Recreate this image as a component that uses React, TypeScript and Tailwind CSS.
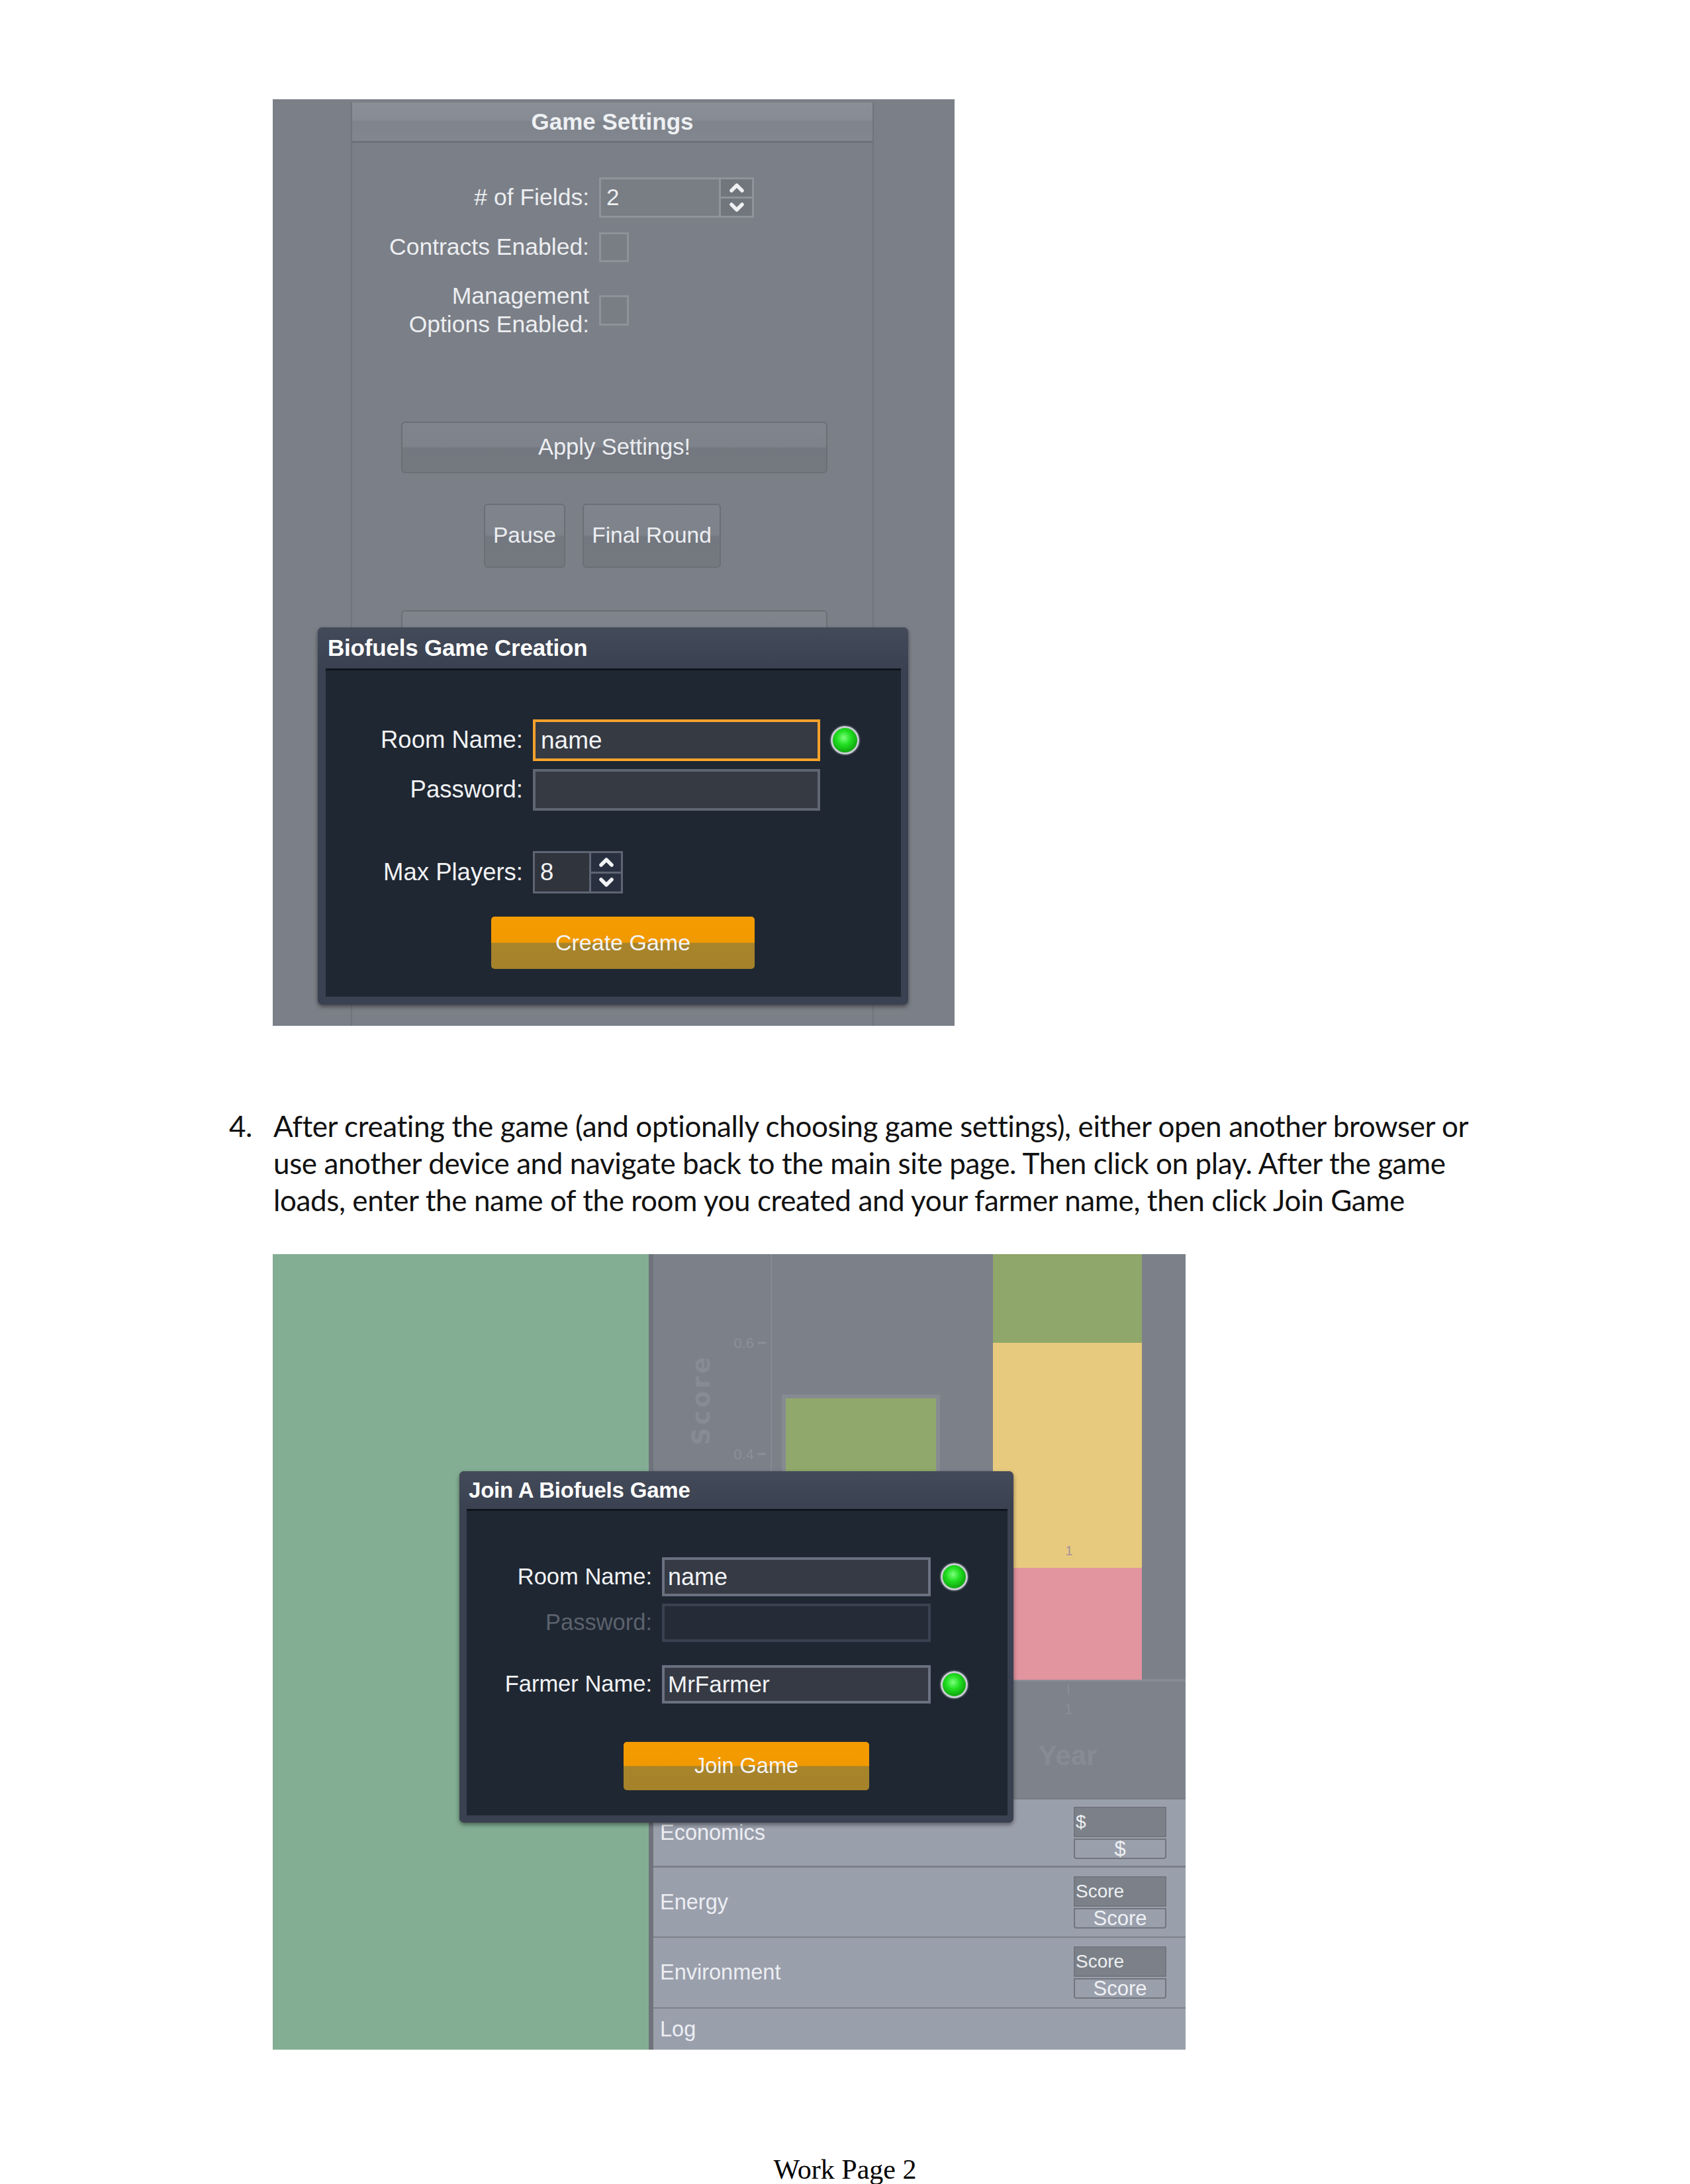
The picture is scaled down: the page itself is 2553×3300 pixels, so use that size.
import React from "react";

const UI = "font-['Liberation_Sans',Arial,sans-serif]";

function Chevron({ dir, color }: { dir: "up" | "down"; color: string }) {
  return (
    <svg width="22" height="14" viewBox="0 0 22 14">
      <path
        d={dir === "up" ? "M3 11 L11 3 L19 11" : "M3 3 L11 11 L19 3"}
        fill="none"
        stroke={color}
        strokeWidth="5.5"
        strokeLinecap="round"
        strokeLinejoin="round"
      />
    </svg>
  );
}

function Indicator({ size }: { size: number }) {
  return (
    <div
      className="rounded-full border-[3px] border-[#c9cdd2] bg-[radial-gradient(circle_at_45%_40%,#7dff7d_0%,#22e022_35%,#0ea30e_75%,#0a6f0a_100%)] shadow-[0_0_0_2px_#3c4450]"
      style={{ width: size, height: size }}
    />
  );
}

const GRAY_BTN =
  "rounded-[6px] border-2 border-[#6a6e75] bg-[linear-gradient(to_bottom,#80858d_0%,#7e838b_48%,#73777f_52%,#74787f_100%)] flex items-center justify-center";

function GameSettingsPanel() {
  return (
    <div className="ml-[118px] mt-[5px] w-[790px] h-[1395px] border-x-2 border-[#70747c] flex flex-col">
      <div className="h-[61px] shrink-0 border-b-[3px] border-[#6d7179] bg-[linear-gradient(to_bottom,#8a8f97_0%,#878c94_45%,#7f848c_50%,#82878f_100%)] flex items-center justify-center">
        <span className={`${UI} text-[35px] font-bold text-[#eef0f3]`}>Game Settings</span>
      </div>
      <div className={`${UI} text-[#eceef1] text-[35.5px] flex flex-col`}>
        <div className="mt-[52px] h-[61px] flex items-center">
          <div className="w-[358px] text-right">&#35; of Fields:</div>
          <div className="ml-[15px] w-[234px] h-[61px] border-[3px] border-[#8f949b] bg-[#797d84] flex">
            <div className="flex-1 flex items-center pl-[8px] text-[35px]">2</div>
            <div className="w-[50px] flex flex-col border-l-[3px] border-[#8f949b]">
              <div className="flex-1 flex items-center justify-center bg-[#71757c] border-b-[3px] border-[#8f949b]">
                <Chevron dir="up" color="#eef0f2" />
              </div>
              <div className="flex-1 flex items-center justify-center bg-[#71757c]">
                <Chevron dir="down" color="#eef0f2" />
              </div>
            </div>
          </div>
        </div>
        <div className="mt-[22px] h-[45px] flex items-center">
          <div className="w-[358px] text-right">Contracts Enabled:</div>
          <div className="ml-[15px] w-[45px] h-[45px] border-[3px] border-[#8e939a] bg-[#797d84]" />
        </div>
        <div className="mt-[29px] h-[87px] flex items-center">
          <div className="w-[358px] text-right leading-[43px]">
            Management
            <br />
            Options Enabled:
          </div>
          <div className="ml-[15px] w-[45px] h-[46px] border-[3px] border-[#8e939a] bg-[#797d84]" />
        </div>
        <div className={`mt-[125px] ml-[74px] w-[644px] h-[78px] text-[34.5px] ${GRAY_BTN}`}>Apply Settings!</div>
        <div className="mt-[46px] ml-[199px] flex gap-[26px] text-[33.5px]">
          <div className={`w-[123px] h-[97px] ${GRAY_BTN}`}>Pause</div>
          <div className={`w-[209px] h-[97px] ${GRAY_BTN}`}>Final Round</div>
        </div>
        <div className={`mt-[64px] ml-[74px] w-[644px] h-[78px] ${GRAY_BTN}`} />
      </div>
    </div>
  );
}

const ORANGE_BTN =
  "rounded-[5px] bg-[linear-gradient(to_bottom,#f49c00_0%,#f19900_49%,#a8842b_51%,#a5822a_100%)] flex items-center justify-center text-[#f4f4f4]";

function CreationDialog() {
  return (
    <div className="absolute left-[68px] top-[798px] w-[892px] h-[570px] rounded-[7px] bg-[#3a4150] shadow-[0_3px_6px_rgba(0,0,0,0.45)] flex flex-col">
      <div className="h-[62px] shrink-0 flex items-center pl-[15px] bg-[linear-gradient(to_bottom,#434a59,#3a4150)] rounded-t-[7px]">
        <span className={`${UI} text-[35px] font-bold text-white tracking-[-0.2px]`}>Biofuels Game Creation</span>
      </div>
      <div className="ml-[12px] mr-[11px] h-[496px] bg-[#1f2732] border-t-[3px] border-[#10151c] flex flex-col">
        <div className={`${UI} text-[#f2f3f5] text-[36.5px] flex flex-col`}>
          <div className="mt-[74px] h-[63px] flex items-center">
            <div className="w-[298px] text-right">Room Name:</div>
            <div className="ml-[15px] w-[434px] h-[63px] border-[4px] border-[#f5a12c] bg-[#353a43] flex items-center pl-[8px] text-[37px]">
              name
            </div>
            <div className="ml-[16px]">
              <Indicator size={43} />
            </div>
          </div>
          <div className="mt-[12px] h-[63px] flex items-center">
            <div className="w-[298px] text-right">Password:</div>
            <div className="ml-[15px] w-[434px] h-[63px] border-[4px] border-[#5f6573] bg-[#353a43]" />
          </div>
          <div className="mt-[61px] h-[64px] flex items-center">
            <div className="w-[298px] text-right">Max Players:</div>
            <div className="ml-[15px] w-[136px] h-[64px] border-[3px] border-[#5f6573] bg-[#2f343d] flex">
              <div className="flex-1 flex items-center pl-[8px]">8</div>
              <div className="w-[48px] flex flex-col border-l-[3px] border-[#5f6573]">
                <div className="flex-1 flex items-center justify-center bg-[#283040] border-b-[3px] border-[#5f6573]">
                  <Chevron dir="up" color="#f2f3f5" />
                </div>
                <div className="flex-1 flex items-center justify-center bg-[#283040]">
                  <Chevron dir="down" color="#f2f3f5" />
                </div>
              </div>
            </div>
          </div>
          <div className={`mt-[35px] ml-[250px] w-[398px] h-[79px] text-[34px] ${ORANGE_BTN}`}>Create Game</div>
        </div>
      </div>
    </div>
  );
}

function TopShot() {
  return (
    <div className="ml-[412px] w-[1030px] h-[1400px] bg-[#7b7f87] relative flex">
      <GameSettingsPanel />
      <CreationDialog />
    </div>
  );
}

function Paragraph() {
  return (
    <div className="mt-[123px] flex font-['Lato',sans-serif] text-[44px] leading-[56px] text-[#111] tracking-[-0.4px]">
      <div className="ml-[346px] w-[67px]">4.</div>
      <div className="flex flex-col whitespace-nowrap">
        <div>After creating the game (and optionally choosing game settings), either open another browser or</div>
        <div>use another device and navigate back to the main site page. Then click on play. After the game</div>
        <div>loads, enter the name of the room you created and your farmer name, then click Join Game</div>
      </div>
    </div>
  );
}

function Chart() {
  return (
    <svg width="804" height="822" viewBox="0 0 804 822" className="block">
      <rect x="0" y="0" width="804" height="822" fill="#7b8089" />
      <rect x="0" y="643" width="804" height="179" fill="#7e838b" />
      <line x1="0" y1="644" x2="804" y2="644" stroke="#8a8f97" strokeWidth="3" />
      <line x1="178" y1="0" x2="178" y2="643" stroke="#868b93" strokeWidth="2" />
      <rect x="194" y="212" width="239" height="431" fill="#868b92" />
      <rect x="200" y="218" width="227" height="425" fill="#91a86c" />
      <rect x="513" y="0" width="225" height="134" fill="#8fa76a" />
      <rect x="513" y="134" width="225" height="340" fill="#e8ca7e" />
      <rect x="513" y="474" width="225" height="169" fill="#e2949f" />
      <text x="152" y="142" textAnchor="end" fontSize="22" fill="#8b9098" fontFamily="Liberation Sans, sans-serif">0.6</text>
      <line x1="158" y1="134" x2="170" y2="134" stroke="#8b9098" strokeWidth="3" />
      <text x="152" y="310" textAnchor="end" fontSize="22" fill="#8b9098" fontFamily="Liberation Sans, sans-serif">0.4</text>
      <line x1="158" y1="302" x2="170" y2="302" stroke="#8b9098" strokeWidth="3" />
      <text
        x="74"
        y="220"
        textAnchor="middle"
        dominantBaseline="middle"
        fontSize="37"
        fontWeight="bold"
        letterSpacing="4"
        fill="#878c94"
        fontFamily="DejaVu Sans, sans-serif"
        transform="rotate(-90 74 220)"
      >
        Score
      </text>
      <text x="628" y="455" textAnchor="middle" fontSize="20" fill="#a48f9c" fontFamily="Liberation Sans, sans-serif">1</text>
      <line x1="627" y1="650" x2="627" y2="666" stroke="#8a8f97" strokeWidth="2" />
      <text x="627" y="695" textAnchor="middle" fontSize="22" fill="#8a8f97" fontFamily="Liberation Sans, sans-serif">1</text>
      <text x="626" y="772" textAnchor="middle" fontSize="42" fontWeight="bold" fill="#878c94" fontFamily="Liberation Sans, sans-serif">Year</text>
    </svg>
  );
}

function ScoreBox({ label }: { label: string }) {
  return (
    <div className={`${UI} w-[140px] flex flex-col text-[#eef0f3]`}>
      <div className="h-[46px] bg-[#7c8189] border-2 border-[#72767e] flex items-center pl-[1px] text-[28px]">
        {label}
      </div>
      <div className="mt-[2px] h-[31px] border-2 border-[#71757d] rounded-b-[4px] bg-[#9a9fac] flex items-center justify-center text-[31px] leading-none">
        {label}
      </div>
    </div>
  );
}

function Row({ label, box, h }: { label: string; box?: string; h: string }) {
  return (
    <div className={`${h} bg-[#9a9fac] flex items-center justify-between pl-[10px] pr-[29px]`}>
      <span className={`${UI} text-[32.5px] text-[#eceef2]`}>{label}</span>
      {box ? <ScoreBox label={box} /> : null}
    </div>
  );
}

function JoinDialog() {
  return (
    <div className="absolute left-[282px] top-[328px] w-[837px] h-[531px] rounded-[7px] bg-[#3a4150] shadow-[0_3px_6px_rgba(0,0,0,0.45)] flex flex-col">
      <div className="h-[57px] shrink-0 flex items-center pl-[14px] bg-[linear-gradient(to_bottom,#434a59,#3a4150)] rounded-t-[7px]">
        <span className={`${UI} text-[33px] font-bold text-white tracking-[-0.2px]`}>Join A Biofuels Game</span>
      </div>
      <div className="ml-[11px] mr-[9px] h-[463px] bg-[#1f2732] border-t-[3px] border-[#10151c] flex flex-col">
        <div className={`${UI} text-[#f2f3f5] text-[34.5px] flex flex-col`}>
          <div className="mt-[70px] h-[59px] flex items-center">
            <div className="w-[280px] text-right">Room Name:</div>
            <div className="ml-[15px] w-[406px] h-[59px] border-[4px] border-[#6a7080] bg-[#353a44] flex items-center pl-[5px] text-[36px]">
              name
            </div>
            <div className="ml-[15px]">
              <Indicator size={41} />
            </div>
          </div>
          <div className="mt-[11px] h-[58px] flex items-center">
            <div className="w-[280px] text-right text-[#5c626d]">Password:</div>
            <div className="ml-[15px] w-[406px] h-[58px] border-[4px] border-[#3a4150] bg-[#262c37]" />
          </div>
          <div className="mt-[35px] h-[58px] flex items-center">
            <div className="w-[280px] text-right">Farmer Name:</div>
            <div className="ml-[15px] w-[406px] h-[58px] border-[4px] border-[#6a7080] bg-[#353a44] flex items-center pl-[5px] text-[35px]">
              MrFarmer
            </div>
            <div className="ml-[15px]">
              <Indicator size={41} />
            </div>
          </div>
          <div className={`mt-[58px] ml-[237px] w-[371px] h-[73px] text-[32.5px] ${ORANGE_BTN}`}>Join Game</div>
        </div>
      </div>
    </div>
  );
}

function BottomShot() {
  return (
    <div className="mt-[54px] ml-[412px] w-[1379px] h-[1202px] flex relative">
      <div className="w-[568px] h-full bg-[#83ae93]" />
      <div className="flex-1 flex flex-col border-l-[7px] border-[#6f747c]">
        <Chart />
        <div className="h-[2px] bg-[#7a7e86]" />
        <Row label="Economics" box="$" h="h-[100px]" />
        <div className="h-[3px] bg-[#7c8088]" />
        <Row label="Energy" box="Score" h="h-[104px]" />
        <div className="h-[2px] bg-[#7c8088]" />
        <Row label="Environment" box="Score" h="h-[105px]" />
        <div className="h-[2px] bg-[#7c8088]" />
        <Row label="Log" h="h-[62px]" />
      </div>
      <JoinDialog />
    </div>
  );
}

export default function App() {
  return (
    <div className="w-[2553px] h-[3300px] bg-white flex flex-col pt-[150px] overflow-hidden">
      <TopShot />
      <Paragraph />
      <BottomShot />
      <div className="mt-[157px] text-center font-['Liberation_Serif',serif] text-[42px] leading-[48px] text-black">
        Work Page 2
      </div>
    </div>
  );
}
